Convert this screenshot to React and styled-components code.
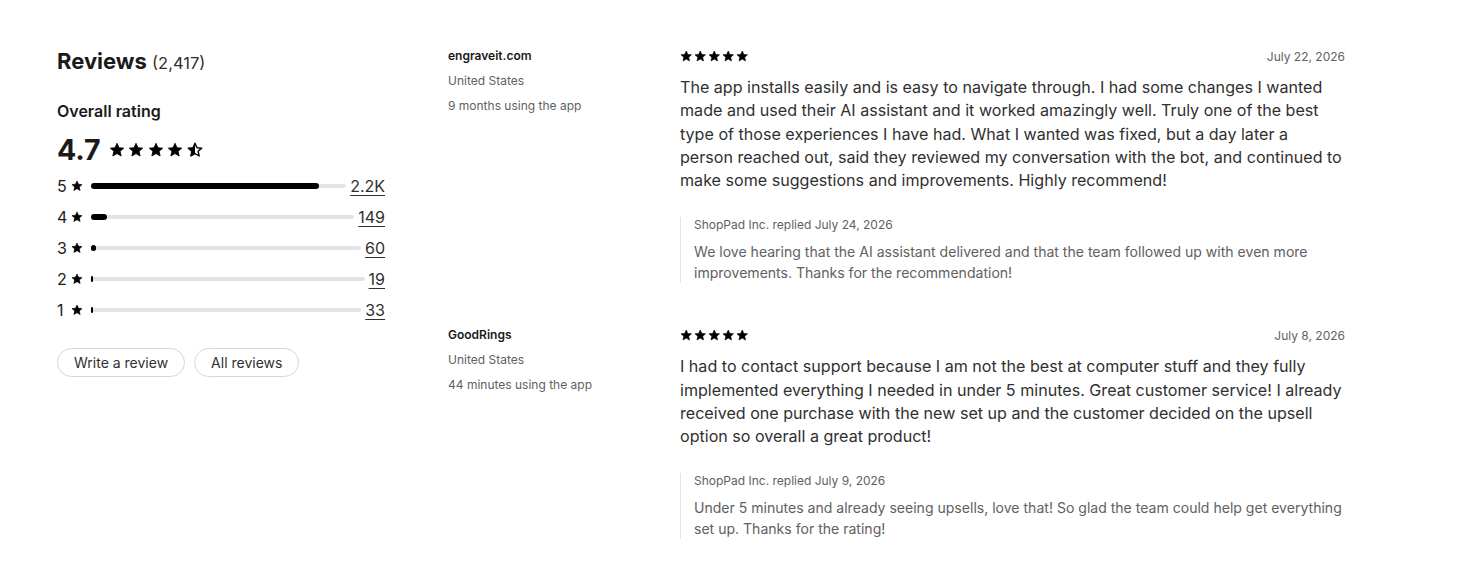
import React from 'react';
import styled, { createGlobalStyle } from 'styled-components';

const GlobalStyle = createGlobalStyle`
  body {
    margin: 0;
    background: #ffffff;
    font-family: Inter, "Noto Sans", sans-serif;
    color: #303030;
  }
`;

const Page = styled.div`
  display: flex;
  gap: 63px;
  padding: 46px 0 0 57px;
`;

const Summary = styled.aside`
  width: 328px;
  flex-shrink: 0;
`;

const Heading = styled.h2`
  margin: 0;
  font-size: 22px;
  line-height: 30px;
  font-weight: 700;
  color: #1a1a1a;
  span {
    font-size: 16.5px;
    font-weight: 400;
    color: #303030;
  }
`;

const SubHeading = styled.h3`
  margin: 23px 0 0;
  font-size: 16px;
  line-height: 20px;
  font-weight: 600;
  color: #1a1a1a;
`;

const Average = styled.div`
  display: flex;
  align-items: center;
  gap: 8px;
  margin-top: 11px;
  font-size: 28.5px;
  line-height: 36px;
  font-weight: 700;
  color: #1a1a1a;
`;

const StarRow = styled.div`
  display: flex;
  align-items: center;
  gap: ${(p) => p.$gap}px;
`;

const Bars = styled.div`
  display: flex;
  flex-direction: column;
  gap: 11px;
  margin-top: 8px;
`;

const BarRow = styled.div`
  display: flex;
  align-items: center;
  height: 20px;
  font-size: 16px;
  line-height: 20px;
`;

const BarLabel = styled.span`
  width: 10px;
  color: #1a1a1a;
`;

const BarStar = styled.span`
  display: flex;
  margin-left: 4px;
`;

const Track = styled.div`
  position: relative;
  flex: 1;
  height: 4px;
  margin: 0 4px 0 8px;
  border-radius: 2px;
  background: #e3e3e3;
`;

const Fill = styled.div`
  position: absolute;
  left: 0;
  top: -1px;
  height: 6px;
  min-width: 2px;
  border-radius: 3px;
  background: #000000;
`;

const Count = styled.a`
  color: #303030;
  text-decoration: underline;
  text-underline-offset: 3px;
  text-decoration-thickness: 1px;
`;

const Buttons = styled.div`
  display: flex;
  gap: 9px;
  margin-top: 28px;
`;

const Pill = styled.button`
  height: 29px;
  padding: 0 16px;
  border: 1px solid #d6d6d6;
  border-radius: 999px;
  background: #ffffff;
  font-family: inherit;
  font-size: 14px;
  color: #303030;
`;

const ReviewList = styled.div`
  display: flex;
  flex-direction: column;
  gap: 42px;
`;

const Review = styled.article`
  display: grid;
  grid-template-columns: 232px 665px;
`;

const Author = styled.div`
  display: flex;
  flex-direction: column;
  gap: 5px;
`;

const AuthorName = styled.div`
  font-size: 12px;
  line-height: 20px;
  font-weight: 600;
  color: #1a1a1a;
`;

const Meta = styled.div`
  font-size: 12px;
  line-height: 20px;
  color: #616161;
`;

const TopLine = styled.div`
  display: flex;
  justify-content: space-between;
  align-items: center;
  height: 20px;
`;

const DateText = styled.span`
  font-size: 12px;
  color: #616161;
`;

const Body = styled.p`
  margin: 10px 0 0;
  font-size: 16.1px;
  line-height: 23.25px;
  color: #303030;
`;

const Reply = styled.div`
  margin-top: 25px;
  padding-left: 13px;
  border-left: 1px solid #e3e3e3;
`;

const ReplyHead = styled.div`
  font-size: 12px;
  line-height: 16px;
  color: #616161;
`;

const ReplyBody = styled.p`
  margin: 9px 0 0;
  font-size: 14.05px;
  line-height: 20.5px;
  color: #616161;
`;

const STAR = '10,1.6 12.5,7.1 18.4,7.7 13.9,11.6 15.2,17.5 10,14.5 4.8,17.5 6.1,11.6 1.6,7.7 7.5,7.1';

const Star = ({ size }) => (
  <svg width={size} height={size} viewBox="0 0 20 20">
    <polygon points={STAR} fill="#000" stroke="#000" strokeWidth="1" strokeLinejoin="round" />
  </svg>
);

const HalfStar = ({ size }) => (
  <svg width={size} height={size} viewBox="0 0 20 20">
    <defs>
      <clipPath id="half">
        <rect x="0" y="0" width="10" height="20" />
      </clipPath>
    </defs>
    <polygon points={STAR} fill="none" stroke="#000" strokeWidth="1.8" strokeLinejoin="round" />
    <polygon points={STAR} fill="#000" clipPath="url(#half)" />
  </svg>
);

const bars = [
  { stars: 5, pct: 89.5, count: '2.2K' },
  { stars: 4, pct: 6, count: '149' },
  { stars: 3, pct: 2, count: '60' },
  { stars: 2, pct: 0, count: '19' },
  { stars: 1, pct: 0, count: '33' },
];

const reviews = [
  {
    name: 'engraveit.com',
    country: 'United States',
    usage: '9 months using the app',
    date: 'July 22, 2026',
    body: 'The app installs easily and is easy to navigate through. I had some changes I wanted made and used their AI assistant and it worked amazingly well. Truly one of the best type of those experiences I have had. What I wanted was fixed, but a day later a person reached out, said they reviewed my conversation with the bot, and continued to make some suggestions and improvements. Highly recommend!',
    replyDate: 'July 24, 2026',
    reply: 'We love hearing that the AI assistant delivered and that the team followed up with even more improvements. Thanks for the recommendation!',
  },
  {
    name: 'GoodRings',
    country: 'United States',
    usage: '44 minutes using the app',
    date: 'July 8, 2026',
    body: 'I had to contact support because I am not the best at computer stuff and they fully implemented everything I needed in under 5 minutes. Great customer service! I already received one purchase with the new set up and the customer decided on the upsell option so overall a great product!',
    replyDate: 'July 9, 2026',
    reply: 'Under 5 minutes and already seeing upsells, love that! So glad the team could help get everything set up. Thanks for the rating!',
  },
];

const App = () => (
  <>
    <GlobalStyle />
    <Page>
      <Summary>
        <Heading>
          Reviews <span>(2,417)</span>
        </Heading>
        <SubHeading>Overall rating</SubHeading>
        <Average>
          4.7
          <StarRow $gap={3.5}>
            {[0, 1, 2, 3].map((i) => <Star key={i} size={16} />)}
            <HalfStar size={16} />
          </StarRow>
        </Average>
        <Bars>
          {bars.map((b) => (
            <BarRow key={b.stars}>
              <BarLabel>{b.stars}</BarLabel>
              <BarStar>
                <Star size={12} />
              </BarStar>
              <Track>
                <Fill style={{ width: `${b.pct}%` }} />
              </Track>
              <Count href="#">{b.count}</Count>
            </BarRow>
          ))}
        </Bars>
        <Buttons>
          <Pill>Write a review</Pill>
          <Pill>All reviews</Pill>
        </Buttons>
      </Summary>
      <ReviewList>
        {reviews.map((r) => (
          <Review key={r.name}>
            <Author>
              <AuthorName>{r.name}</AuthorName>
              <Meta>{r.country}</Meta>
              <Meta>{r.usage}</Meta>
            </Author>
            <div>
              <TopLine>
                <StarRow $gap={1.5}>
                  {[0, 1, 2, 3, 4].map((i) => <Star key={i} size={12.5} />)}
                </StarRow>
                <DateText>{r.date}</DateText>
              </TopLine>
              <Body>{r.body}</Body>
              <Reply>
                <ReplyHead>ShopPad Inc. replied {r.replyDate}</ReplyHead>
                <ReplyBody>{r.reply}</ReplyBody>
              </Reply>
            </div>
          </Review>
        ))}
      </ReviewList>
    </Page>
  </>
);

export default App;
